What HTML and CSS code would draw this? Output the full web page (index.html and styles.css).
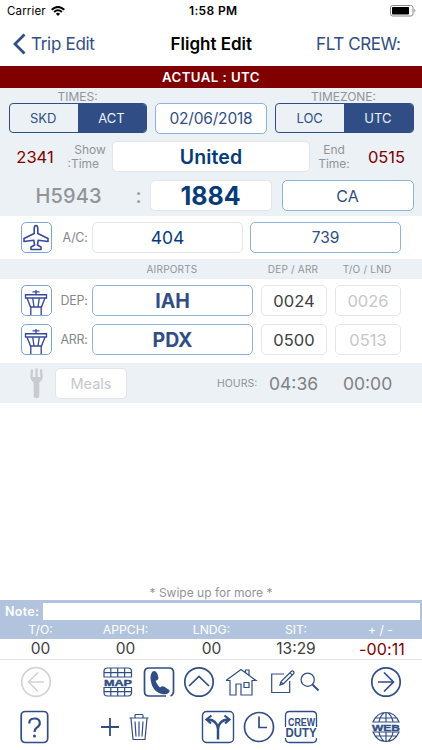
FILE: index.html
```html
<!DOCTYPE html>
<html lang="en">
<head>
<meta charset="utf-8">
<title>Flight Edit</title>
<link rel="stylesheet" href="styles.css">
</head>
<body>
<header>
  <div class="status">
    <span class="carrier">Carrier</span>
    <svg class="wifi" width="14" height="10" viewBox="0 0 14 10"><g fill="none" stroke="#000" stroke-width="1.9"><path d="M.7 3.7Q7-1.9 13.3 3.7M3.1 6Q7 2.5 10.9 6"/></g><path d="M4.9 7.8Q7 5.9 9.1 7.8L7 9.9z"/></svg>
    <b class="clock">1:58 PM</b>
    <svg class="battery" width="26" height="12" viewBox="0 0 26 12"><rect x=".5" y=".5" width="22.5" height="10.5" rx="2.2" fill="none" stroke="#888"/><rect x="2" y="2" width="17" height="7.5" rx=".7"/><path d="M24.3 3.8q2 2 0 4z" fill="#888"/></svg>
  </div>
  <nav>
    <svg width="13" height="22" viewBox="0 0 13 22"><path d="M11.5 1.5 2 11l9.5 9.5" fill="none" stroke="#304e85" stroke-width="2.8"/></svg>
    <a class="back">Trip Edit</a>
    <h1>Flight Edit</h1>
    <a class="crew">FLT CREW:</a>
  </nav>
  <div class="banner">ACTUAL : UTC</div>
</header>
<main>
  <section class="panel">
    <div class="captions"><span>TIMES:</span><span></span><span>TIMEZONE:</span></div>
    <div class="row switches">
      <div class="segment"><span>SKD</span><span class="on">ACT</span></div>
      <div class="field link date">02/06/2018</div>
      <div class="segment"><span>LOC</span><span class="on">UTC</span></div>
    </div>
    <div class="row duty">
      <span class="red">2341</span>
      <span class="stack show">&nbsp;&nbsp;Show<br>:Time</span>
      <div class="field airline">United</div>
      <span class="stack end">End<br>Time:</span>
      <span class="red">0515</span>
    </div>
    <div class="row flight">
      <span class="tail">H5943</span><span class="colon">:</span>
      <div class="field number">1884</div>
      <div class="field link seat">CA</div>
    </div>
  </section>
  <section class="row aircraft">
    <div class="iconbox"><svg width="29" height="29" viewBox="0.5 0.5 29 29"><path d="M12.7 11V6.500Q12.700 3 14.500 3T16.300 6.500V11L26.500 16v3l-9.800-1.200-.8 4.700 3.600 2v2.500H9.500v-2.500l3.600-2-.8-4.700L2.500 19v-3z" fill="none" stroke="#38489b" stroke-width="1.600" stroke-linejoin="round"/></svg></div>
    <span class="label">A/C:</span>
    <div class="field ac">404</div>
    <div class="field link type">739</div>
  </section>
  <div class="heads"><span>AIRPORTS</span><span>DEP / ARR</span><span>T/O / LND</span></div>
  <section class="airports">
    <div class="row leg">
      <div class="iconbox"><svg width="29" height="29" viewBox="0.5 0.5 29 29"><g id="tower" fill="none" stroke="#38489b" stroke-width="1.35"><path d="M14.500 4.500V9M11 6.400h7M4 9.200h21v3.300H4zM5.500 12.500 9 21.500h11l3.500-9M11.200 12.500l1.300 9M17.800 12.500l-1.300 9M9.300 30v-8.500h10.400V30"/></g></svg></div>
      <span class="label">DEP:</span><div class="field link airport">IAH</div>
      <div class="field time">0024</div><div class="field time dim">0026</div>
    </div>
    <div class="row leg">
      <div class="iconbox"><svg width="29" height="29" viewBox="0.5 0.5 29 29"><use href="#tower"/></svg></div>
      <span class="label">ARR:</span><div class="field link airport">PDX</div>
      <div class="field time">0500</div><div class="field time dim">0513</div>
    </div>
  </section>
  <section class="meals">
    <svg width="13" height="31" viewBox="0 0 13 31"><g fill="none" stroke="#c9cccf" stroke-linecap="round"><path d="M1.900 2.500 1.500 8.500M6.500 1.500v8M11.100 2.500l.4 6" stroke-width="2.300"/><path d="M6.500 13v14.500" stroke-width="5.600"/></g><path d="M.4 7.500Q1.500 9 3 9h7q1.500 0 2.600-1.500.2 5-3.300 6.800H3.700Q.2 12.500.4 7.500z" fill="#c9cccf"/></svg>
    <div class="field mealbox">Meals</div>
    <span class="hours">HOURS:</span><span class="total">04:36</span><span class="total">00:00</span>
  </section>
</main>
<p class="hint">* Swipe up for more *</p>
<footer>
  <div class="note"><b>Note:</b><div></div></div>
  <div class="stats names"><span>T/O:</span><span>APPCH:</span><span>LNDG:</span><span>SIT:</span><span>+ / -</span></div>
  <div class="stats values"><span>00</span><span>00</span><span>00</span><span>13:29</span><span class="neg">-00:11</span></div>
  <div class="tools first">
    <svg class="faded" width="32" height="32" viewBox="0 0 32 32"><circle cx="16" cy="16" r="14.3"/><path d="M24 16H8.500M18 6.500 8.500 16l9.500 9.500"/></svg>
    <svg width="32" height="32" viewBox="0 0 32 32"><g stroke-width="1.200"><path d="M2 11V5.500Q2 2 5.500 2h20.500Q29.500 2 29.500 5.500V11zM2 21.500v5Q2 30 5.500 30h20.500Q29.500 30 29.500 26.500v-5zM2 6.700h27.500M2 25.700h27.500M8.800 2v9M15.700 2v9M22.600 2v9M8.800 21.500V30M15.700 21.500V30M22.600 21.500V30"/></g><text class="heavy" x="2" y="19.500" textLength="28" lengthAdjust="spacingAndGlyphs" font-size="9.500">MAP</text></svg>
    <svg width="32" height="32" viewBox="0 0 32 32"><path d="M23 30H6Q1.500 30 1.500 25.500V6.500Q1.500 2 6 2h20q4.500 0 4.500 4.500v19q0 3-3 4.500"/><path class="solid" d="M9 6q3.500-2.500 5.500 2l1 4q0 2-3 3 2 4.500 4.500 6.500 2-2 4-1l4.500 3q2 1 0 3.500-2.500 2-6.500 1Q12.500 27 9 19.500 6 11 9 6z"/></svg>
    <svg width="32" height="32" viewBox="0 0 32 32"><circle cx="16" cy="16" r="14.200"/><path d="m6 20 10-9.500L26 20"/></svg>
    <svg width="32" height="32" viewBox="0 0 32 32"><g stroke-width="1.200"><path d="M5 14v15h6V18h5v11h11V14M1 14.500 16 3.500 31 14.500H27M1 14.500h4M20.500 6.500V4H24v5.200M19 16.500h5v5h-5z"/></g></svg>
    <svg width="26" height="26" viewBox="0 0 26 26"><path d="M14 5H1.700v18.500h18V12" stroke-width="1.200"/><path d="m10 16 1-3.500L21.500 2.200q1-.8 2 .3t.3 2L13.200 15zM20 3.800l2.300 2.300M11 13l2 2" stroke-width="1.200"/></svg>
    <svg width="20" height="20" viewBox="0 0 20 20"><circle cx="7.700" cy="7.700" r="6.600" stroke-width="1.200"/><path d="m12.500 12.500 6 6" stroke-width="2"/></svg>
    <svg width="32" height="32" viewBox="0 0 32 32"><circle cx="16" cy="16" r="14.200"/><path d="M8 16h15.500M14 6.500l9.500 9.500-9.500 9.500"/></svg>
  </div>
  <div class="tools second">
    <svg width="30" height="34" viewBox="0 0 30 34"><rect x="1.200" y="1.500" width="26.500" height="31" rx="4"/><path d="M9.300 13.500Q9 8.500 14.500 8.500q5.300 0 5.300 4.500 0 2.800-3 4.600-2.300 1.500-2.300 4.400" stroke-width="2.200"/><circle class="solid" cx="14.500" cy="26" r="1.500"/></svg>
    <svg width="18" height="18" viewBox="0 0 18 18"><path d="M9 0v18M0 9h18" stroke-width="1.800"/></svg>
    <svg width="20" height="28" viewBox="0 0 20 28"><g stroke-width="1.200"><path d="M.5 5h19M6 5V2.500Q6 1.500 7 1.500h6q1 0 1 1V5M2 5.500l2 21h12l2-21M6 8.500l1 15M10 8.500v15M14 8.500l-1 15"/></g></svg>
    <svg width="34" height="34" viewBox="0 0 34 34"><rect x="1.500" y="1.500" width="31" height="31" rx="4" stroke-width="1.400"/><path d="M17 29.500V19Q16 10 7 9.500M17 19q1-9 10-9.500" stroke-width="2.500"/><path d="m10.500 5.500-5 4 4.500 4M23.500 5.500l5 4-4.500 4" stroke-width="2.200"/></svg>
    <svg width="32" height="32" viewBox="0 0 32 32"><circle cx="16" cy="16" r="14.500"/><path d="M16 5.500v11h8"/></svg>
    <svg width="34" height="34" viewBox="0 0 34 34"><path d="M1.500 17V5.500q0-4 4-4h23q4 0 4 4V17M1.500 28v.5q0 4 4 4h23q4 0 4-4V28" stroke-width="1.300"/><text x="4" y="15.500" textLength="27" lengthAdjust="spacingAndGlyphs" font-size="10.500">CREW</text><text x="1.500" y="27" textLength="31" lengthAdjust="spacingAndGlyphs" font-size="12">DUTY</text></svg>
    <svg width="32" height="32" viewBox="0 0 32 32"><g stroke-width="1.200"><path d="M3 11Q7 1.500 16 1.500T29 11zM3 21q4 9.500 13 9.500T29 21zM5 7h22M5 25h22M16 1.500V11M16 21v9.500M9 11q1-6 5-9M23 11q-1-6-5-9M9 21q1 6 5 9M23 21q-1 6-5 9"/></g><text class="heavy" x="2" y="19.500" textLength="28" lengthAdjust="spacingAndGlyphs" font-size="9.500">WEB</text></svg>
  </div>
</footer>
</body>
</html>
```
FILE: styles.css
```css
* { box-sizing: border-box; }
body { margin: 0; width: 422px; height: 750px; overflow: hidden; background: #fff; color: #304e85; font-family: Inter, "Liberation Sans", sans-serif; display: flex; flex-direction: column; }
svg { display: block; flex: none; }
span, a, b, h1 { white-space: nowrap; }
.status { height: 22px; display: flex; align-items: center; color: #000; font-size: 11.500px; }
.carrier { width: 38px; margin-left: 7px; letter-spacing: .15px; }
.wifi { margin-left: 6px; }
.clock { margin-left: 124px; width: 140px; font-size: 12px; line-height: 14px; font-weight: 600; letter-spacing: .35px; }
.battery { margin-left: 61px; }
nav { height: 43.500px; display: grid; grid-template-columns: 13px 119px 1fr 94px; column-gap: 5px; padding: 0 12px 0 13px; align-items: center; font-size: 17px; }
.back { letter-spacing: -.3px; }
h1 { margin: 0; font-size: 17px; font-weight: 600; color: #000; letter-spacing: 0; padding-left: 15.500px; }
.crew { letter-spacing: -.4px; }
.banner { height: 22.500px; background: #800000; color: #fff; text-align: center; font-size: 13.200px; line-height: 23px; font-weight: 600; letter-spacing: .45px; }
.panel { height: 128px; background: #ecf1f5; padding: 2px 8.500px 0; }
.captions { height: 13px; display: grid; grid-template-columns: 138px 128px 138px; text-align: center; font-size: 12px; line-height: 13px; color: #919498; }
.row { display: flex; align-items: center; }
.switches { height: 30px; gap: 8px; }
.segment { width: 138.500px; height: 30px; display: grid; grid-template-columns: 1fr 1fr; border: 1px solid #304e85; border-radius: 4px; overflow: hidden; text-align: center; font-size: 13px; line-height: 28px; }
.segment span { padding-right: 1px; }
.on { background: #304e85; color: #ecf1f5; }
.field { background: #fff; border: 1px solid #e3e5e9; border-radius: 5px; height: 31px; display: flex; align-items: center; justify-content: center; flex: none; color: #063b77; }
.link { border-color: #8eb2dc; color: #304e85; }
.date { width: 112px; font-size: 15.500px; letter-spacing: -.2px; }
.duty { height: 31px; margin-top: 8px; }
.red { width: 53px; text-align: center; color: #800000; font-size: 16.500px; }
.duty .red:last-child { width: 49px; }
.stack { font-size: 12px; line-height: 13.500px; color: #919498; }
.show { width: 50.500px; padding-left: 6px; }
.end { width: 52px; text-align: center; padding-right: 4px; }
.airline { width: 198px; font-size: 19.500px; font-weight: 600; letter-spacing: .1px; }
.flight { height: 31px; margin-top: 8px; }
.tail { width: 122px; padding-left: 27px; font-size: 20px; font-weight: 500; letter-spacing: .1px; color: #919498; }
.colon { width: 19px; padding-left: 5px; font-size: 20px; font-weight: 500; color: #919498; }
.number { width: 122px; font-size: 25px; font-weight: 700; }
.seat { width: 132px; margin-left: 10px; font-size: 16px; }
.aircraft { height: 43px; padding-left: 20.500px; }
.iconbox { width: 31px; height: 31px; border: 1px solid #79a6da; border-radius: 5px; flex: none; overflow: hidden; }
.label { width: 36px; margin-right: 4.500px; text-align: right; font-size: 12.500px; color: #85878a; letter-spacing: -.3px; }
.ac { width: 151px; font-size: 17.500px; }
.type { width: 151px; margin-left: 7px; font-size: 15.500px; }
.heads { height: 20px; background: #ecf1f5; display: grid; grid-template-columns: 160px 66px 66px; column-gap: 8px; padding-left: 92px; text-align: center; font-size: 10px; line-height: 20px; color: #919498; letter-spacing: .2px; }
.airports { padding: 6px 20.500px 8px; display: grid; row-gap: 8px; height: 84px; }
.leg { height: 31px; }
.airport { width: 161px; font-size: 19.500px; font-weight: 700; letter-spacing: -.1px; }
.time { width: 66px; margin-left: 8px; font-size: 16.500px; color: #3e4042; }
.dim { color: #c5c7cb; }
.meals { height: 40px; background: #ecf1f5; display: flex; align-items: center; padding-left: 29.500px; }
.mealbox { width: 72px; margin-left: 12.500px; color: #c5c7cb; font-size: 14.500px; }
.hours { width: 42px; margin-left: 90px; font-size: 10.500px; color: #919498; }
.total { width: 74px; padding-left: 10px; font-size: 17.500px; color: #7e8185; }
.hint { margin: auto 0 0; height: 15px; text-align: center; font-size: 12px; line-height: 15px; color: #919498; }
footer { height: 150px; border-top: 1px solid #b2c3dd; }
.note { height: 21px; background: #b2c3dd; display: flex; color: #fff; font-size: 12.500px; line-height: 21px; }
.note b { width: 38px; margin-left: 5px; font-weight: 600; letter-spacing: .3px; }
.note div { width: 377px; height: 17px; background: #fff; margin-top: 2px; }
.stats { display: grid; grid-template-columns: 81px 89px 83px 86px 83px; text-align: center; }
.names { height: 17px; background: #b2c3dd; color: #fff; font-size: 12.200px; line-height: 16px; }
.values { height: 21px; border-bottom: 1px solid #e7e7e7; color: #3e4042; font-size: 15.500px; line-height: 20px; }
.values .neg { color: #800000; font-size: 16px; letter-spacing: .1px; padding-left: 3px; }
.tools { display: flex; align-items: center; height: 44px; padding-left: 20px; }
.second { height: 45.500px; }
.tools svg { fill: none; stroke: #304e85; stroke-width: 1.700; overflow: visible; }
.tools svg.faded { stroke: #d4d4d4; }
.tools .solid { fill: #304e85; stroke: none; }
.tools text { fill: #304e85; stroke: none; font-family: "Liberation Sans", sans-serif; font-weight: 700; }
.tools .heavy { stroke: #304e85; stroke-width: .4; }
.first svg:nth-child(2) { margin-left: 50px; }
.first svg:nth-child(3) { margin-left: 9px; }
.first svg:nth-child(4) { margin-left: 8px; }
.first svg:nth-child(5) { margin-left: 10px; }
.first svg:nth-child(6) { margin-left: 13px; }
.first svg:nth-child(7) { margin-left: 4px; }
.first svg:nth-child(8) { margin-left: 50px; }
.second svg:nth-child(2) { margin-left: 51px; }
.second svg:nth-child(3) { margin-left: 10px; }
.second svg:nth-child(4) { margin-left: 52px; }
.second svg:nth-child(5) { margin-left: 8px; }
.second svg:nth-child(6) { margin-left: 9px; }
.second svg:nth-child(7) { margin-left: 52px; }
```
